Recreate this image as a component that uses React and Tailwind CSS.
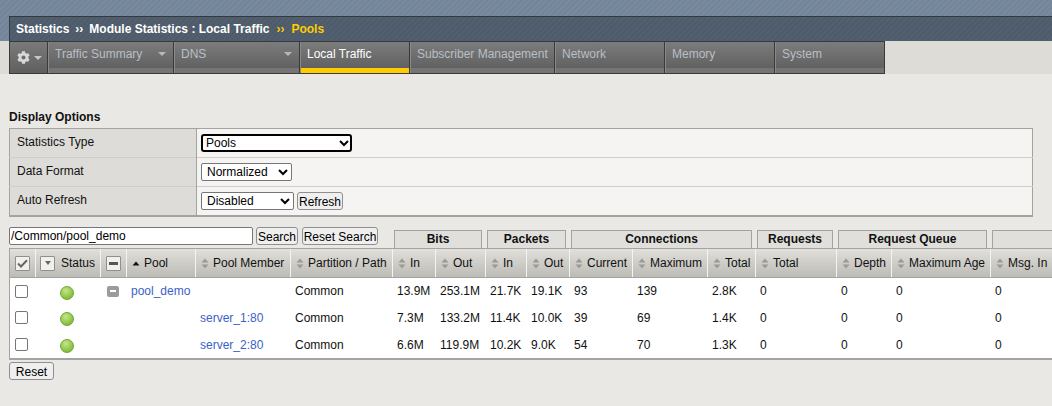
import React from "react";
import { FaCog } from "react-icons/fa";

const tabs = [
  { t: "Traffic Summary", w: "w-[126px]", arrow: true },
  { t: "DNS", w: "w-[126px]", arrow: true },
  { t: "Local Traffic", w: "w-[110px]", active: true },
  { t: "Subscriber Management", w: "w-[145px]" },
  { t: "Network", w: "w-[110px]" },
  { t: "Memory", w: "w-[110px]" },
  { t: "System", w: "w-[110px]" },
];

const groups = [
  { t: "Bits", c: "ml-[16px] w-[88px]" },
  { t: "Packets", c: "ml-[5px] w-[79px]" },
  { t: "Connections", c: "ml-[5px] w-[181px]" },
  { t: "Requests", c: "ml-[5px] w-[76px]" },
  { t: "Request Queue", c: "ml-[5px] w-[149px]" },
  { t: "", c: "ml-[5px] w-[80px]" },
];

const cols = [
  { t: "Partition / Path", w: "w-[102px]" },
  { t: "In", w: "w-[43px]" },
  { t: "Out", w: "w-[50px]" },
  { t: "In", w: "w-[41px]" },
  { t: "Out", w: "w-[43px]" },
  { t: "Current", w: "w-[63px]" },
  { t: "Maximum", w: "w-[75px]" },
  { t: "Total", w: "w-[48px]" },
  { t: "Total", w: "w-[81px]" },
  { t: "Depth", w: "w-[55px]" },
  { t: "Maximum Age", w: "w-[99px]" },
  { t: "Msg. In", w: "w-[70px]" },
];

const rows = [
  { pool: "pool_demo", member: "", v: ["Common", "13.9M", "253.1M", "21.7K", "19.1K", "93", "139", "2.8K", "0", "0", "0", "0"] },
  { pool: "", member: "server_1:80", v: ["Common", "7.3M", "133.2M", "11.4K", "10.0K", "39", "69", "1.4K", "0", "0", "0", "0"] },
  { pool: "", member: "server_2:80", v: ["Common", "6.6M", "119.9M", "10.2K", "9.0K", "54", "70", "1.3K", "0", "0", "0", "0"] },
];

const Sort = () => (
  <svg width="8" height="11" viewBox="0 0 8 11" className="mr-[4px] shrink-0">
    <path d="M4 0.5 L7.5 4.5 H0.5 Z M0.5 6.5 H7.5 L4 10.5 Z" fill="#9a9a96" />
  </svg>
);

const SortUp = () => (
  <svg width="8" height="5" viewBox="0 0 8 5" className="mr-[4px] shrink-0">
    <path d="M4 0.5 L7.5 4.5 H0.5 Z" fill="#111" />
  </svg>
);

const MiniBtn = ({ children }) => (
  <span className="flex h-[15px] w-[15px] items-center justify-center rounded-[1px] border border-[#8f8f8b] bg-[#f1f0ec]">
    {children}
  </span>
);

const Dot = () => (
  <span className="mt-[3px] ml-[24px] block h-[14px] w-[14px] rounded-full border border-[#6fa52f] bg-[radial-gradient(circle_at_40%_30%,#c6e58c,#8fc548_60%,#74b032)]" />
);

const Cb = () => (
  <input type="checkbox" className="block h-[13px] w-[13px] appearance-none rounded-[2px] border border-[#767676] bg-white" />
);

const th = "h-[28px] border-r border-[#f4f4f2] bg-[linear-gradient(#e0dfda,#bcbbb6)] p-0 pt-[1px] text-left font-normal text-[#111]";
const td = "h-[27px] p-0 pt-[1px] pl-[4px] text-left align-middle";
const ctl = "h-[18px] rounded-[2px] border border-[#767676] bg-white pl-[1px] text-[12px] text-black";
const btn = "h-[18px] shrink-0 rounded-[3px] border border-[#8f8f8f] bg-[#efefef] text-[12px] whitespace-nowrap text-black";

export default function App() {
  return (
    <div className="h-[406px] w-[1052px] overflow-hidden bg-[#e9e8e4] font-['Liberation_Sans',Arial,sans-serif] text-[12px] text-[#111]">
      <div className="h-[41px] bg-[#748599] bg-[repeating-linear-gradient(135deg,#748599_0px,#748599_2px,#788a9e_2px,#788a9e_4px)] pt-[16px] pl-[9px]">
        <div className="flex h-[25px] items-center gap-[6px] border-t border-l border-[#34393f] bg-[#4f5c6b] bg-[repeating-linear-gradient(135deg,#4e5b6a_0px,#4e5b6a_2px,#525f6e_2px,#525f6e_4px)] pl-[6px] font-bold text-white">
          <span>Statistics</span>
          <span className="text-[12px]">››</span>
          <span>Module Statistics : Local Traffic</span>
          <span className="ml-[1px] text-[12px] text-[#ffcc00]">››</span>
          <span className="ml-[1px] text-[#ffcc00]">Pools</span>
        </div>
      </div>

      <div className="flex h-[33px] bg-[#dddcd7] pl-[9px]">
        <div className="flex h-[33px] border-t border-b border-l border-[#3a3a3a]">
          <div className="flex w-[38px] items-center gap-[4px] border-r border-[#3a3a3a] bg-[linear-gradient(#7a7a7a,#5f5f5f)] pl-[7px]">
            <FaCog className="h-[13px] w-[13px] text-[#d8d8d8]" />
            <span className="h-0 w-0 border-x-[4px] border-t-[4px] border-x-transparent border-t-[#c8c8c8]" />
          </div>
          {tabs.map((x) => (
            <div key={x.t + x.w} className={`flex flex-col border-r border-l border-r-[#3a3a3a] border-l-[#8a8a8a] ${x.w}`}>
              <div className="flex h-[26px] items-center justify-between bg-[linear-gradient(#7c7c7c,#616161)] pr-[7px] pb-[2px] pl-[6px]">
                <span className={`whitespace-nowrap ${x.active ? "text-white" : "text-[#b8bfc6]"}`}>{x.t}</span>
                {x.arrow && <span className="h-0 w-0 border-x-[4px] border-t-[4px] border-x-transparent border-t-[#b8b8b8]" />}
              </div>
              <div className={`h-[5px] ${x.active ? "bg-[#ffcc00]" : "bg-[#757575]"}`} />
            </div>
          ))}
        </div>
      </div>

      <div className="px-[9px]">
        <div className="mt-[36px] h-[18px] leading-[14px] font-bold">Display Options</div>
        <table className="w-[1024px] border-collapse border border-b-2 border-[#a3a3a0] bg-[#f5f4f2]">
          <tbody>
            <tr className="h-[29px] border-b border-[#cfcecb]">
              <td className="w-[187px] border-r border-[#a3a3a0] bg-[#dddcd8] pb-[2px] pl-[7px]">Statistics Type</td>
              <td className="pl-[4px]">
                <select defaultValue="Pools" className="block h-[18px] w-[151px] rounded-[3px] border-0 bg-white pl-[1px] text-[12px] text-black shadow-[inset_0_0_0_2px_#000]">
                  <option>Pools</option>
                </select>
              </td>
            </tr>
            <tr className="h-[29px] border-b border-[#cfcecb]">
              <td className="border-r border-[#a3a3a0] bg-[#dddcd8] pb-[2px] pl-[7px]">Data Format</td>
              <td className="pl-[4px]">
                <select defaultValue="Normalized" className={`block w-[91px] ${ctl}`}>
                  <option>Normalized</option>
                </select>
              </td>
            </tr>
            <tr className="h-[29px]">
              <td className="border-r border-[#a3a3a0] bg-[#dddcd8] pb-[2px] pl-[7px]">Auto Refresh</td>
              <td className="pl-[4px]">
                <div className="flex items-center gap-[3px]">
                  <select defaultValue="Disabled" className={`w-[93px] ${ctl}`}>
                    <option>Disabled</option>
                  </select>
                  <button className={`${btn} w-[46px]`}>Refresh</button>
                </div>
              </td>
            </tr>
          </tbody>
        </table>

        <div className="mt-[10px] flex h-[21px] items-start">
          <input readOnly value="/Common/pool_demo" className="h-[18px] w-[244px] shrink-0 rounded-[2px] border border-[#767676] bg-white pl-[1px] text-[12px] text-black" />
          <button className={`${btn} ml-[3px] w-[42px]`}>Search</button>
          <button className={`${btn} ml-[4px] w-[76px]`}>Reset Search</button>
          <div className="flex shrink-0 self-end">
            {groups.map((g) => (
              <div key={g.t + g.c} className={`mt-[3px] flex h-[18px] shrink-0 items-center justify-center border-x border-t border-[#a3a3a0] bg-[#e0dfdb] font-bold ${g.c}`}>
                {g.t}
              </div>
            ))}
          </div>
        </div>

        <table className="w-[1052px] table-fixed border-separate border-spacing-0 border-t border-b-2 border-l border-[#a3a3a0] bg-white">
          <thead>
            <tr>
              <th className={`${th} w-[26px]`}>
                <span className="ml-[5px] block w-[15px]">
                  <MiniBtn>
                    <svg width="11" height="9" viewBox="0 0 11 9"><path d="M1 4.5 L4 7.5 L10 1.2" fill="none" stroke="#666" strokeWidth="2" /></svg>
                  </MiniBtn>
                </span>
              </th>
              <th className={`${th} w-[65px]`}>
                <span className="flex items-center gap-[6px] pl-[4px]">
                  <MiniBtn><span className="h-0 w-0 border-x-[3px] border-t-[4px] border-x-transparent border-t-[#666]" /></MiniBtn>
                  Status
                </span>
              </th>
              <th className={`${th} w-[26px]`}>
                <span className="ml-[5px] block w-[15px]">
                  <MiniBtn><span className="h-[3px] w-[9px] bg-[#555]" /></MiniBtn>
                </span>
              </th>
              <th className={`${th} w-[69px]`}>
                <span className="flex items-center pl-[5px]"><SortUp />Pool</span>
              </th>
              <th className={`${th} w-[95px]`}>
                <span className="flex items-center pl-[5px] whitespace-nowrap"><Sort />Pool Member</span>
              </th>
              {cols.map((c, i) => (
                <th key={i} className={`${th} ${c.w}`}>
                  <span className="flex items-center pl-[5px] whitespace-nowrap"><Sort />{c.t}</span>
                </th>
              ))}
            </tr>
          </thead>
          <tbody>
            {rows.map((r, ri) => (
              <tr key={ri}>
                <td className={`${td} border-t border-[#a3a3a0] pl-[5px] ${ri ? "border-t-0" : ""}`}><Cb /></td>
                <td className={`${td} border-t border-[#a3a3a0] !pl-0 ${ri ? "border-t-0" : ""}`}><Dot /></td>
                <td className={`${td} border-t border-[#a3a3a0] pl-[6px] ${ri ? "border-t-0" : ""}`}>
                  {r.pool && (
                    <span className="flex h-[11px] w-[12px] items-center justify-center rounded-[2px] bg-[#9b9b9b]">
                      <span className="h-[2px] w-[6px] bg-white" />
                    </span>
                  )}
                </td>
                <td className={`${td} border-t border-[#a3a3a0] text-[#3b62c9] ${ri ? "border-t-0" : ""}`}>{r.pool}</td>
                <td className={`${td} border-t border-[#a3a3a0] text-[#3b62c9] ${ri ? "border-t-0" : ""}`}>{r.member}</td>
                {r.v.map((v, i) => (
                  <td key={i} className={`${td} border-t border-[#a3a3a0] ${ri ? "border-t-0" : ""}`}>{v}</td>
                ))}
              </tr>
            ))}
          </tbody>
        </table>

        <button className={`${btn} mt-[2px] block w-[45px]`}>Reset</button>
      </div>
    </div>
  );
}
